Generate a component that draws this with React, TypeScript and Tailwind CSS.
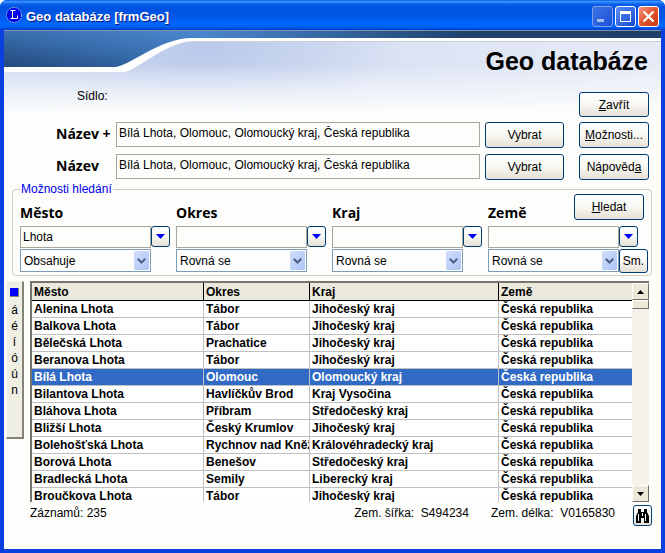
import { useState, type ReactNode } from "react";

const buttonBase =
  "rounded-[3px] border border-[#003c74] bg-linear-to-b from-white via-[#f8f7f3] to-[#e4e0d6] text-xs leading-4 text-black";

const rows: [string, string, string][] = [
  ["Alenina Lhota", "Tábor", "Jihočeský kraj"],
  ["Balkova Lhota", "Tábor", "Jihočeský kraj"],
  ["Bělečská Lhota", "Prachatice", "Jihočeský kraj"],
  ["Beranova Lhota", "Tábor", "Jihočeský kraj"],
  ["Bílá Lhota", "Olomouc", "Olomoucký kraj"],
  ["Bilantova Lhota", "Havlíčkův Brod", "Kraj Vysočina"],
  ["Bláhova Lhota", "Příbram", "Středočeský kraj"],
  ["Bližší Lhota", "Český Krumlov", "Jihočeský kraj"],
  ["Bolehošťská Lhota", "Rychnov nad Kněž", "Královéhradecký kraj"],
  ["Borová Lhota", "Benešov", "Středočeský kraj"],
  ["Bradlecká Lhota", "Semily", "Liberecký kraj"],
  ["Broučkova Lhota", "Tábor", "Jihočeský kraj"],
];

const filters = [
  { id: "mesto", label: "Město", value: "Lhota", mode: "Obsahuje" },
  { id: "okres", label: "Okres", value: "", mode: "Rovná se" },
  { id: "kraj", label: "Kraj", value: "", mode: "Rovná se" },
  { id: "zeme", label: "Země", value: "", mode: "Rovná se" },
];

function TitleBar() {
  return (
    <header className="flex h-[30px] items-center rounded-t-[7px] bg-[linear-gradient(180deg,#0058e6_0%,#3a93ff_5%,#0a60ea_14%,#0053e1_25%,#0055e5_50%,#0066ff_80%,#0062f8_90%,#0046d8_97%,#003cc8_100%)] pr-[6px] pl-[6px]">
      <svg width="16" height="16" viewBox="0 0 16 16" aria-hidden="true">
        <circle cx="8" cy="8" r="7.500" fill="#0000f0" stroke="#9db6d8" strokeWidth="1" strokeDasharray="2 1" />
        <path d="M4.500 3.500h5M6.500 3.500v8M4.500 11.500h7v-3" fill="none" stroke="#fff" strokeWidth="1" />
      </svg>
      <span className="ml-1 flex-1 pt-[3px] text-[13px] leading-5 font-bold text-white [text-shadow:1px_1px_#0a1883]">
        Geo databáze [frmGeo]
      </span>
      <div className="flex gap-[2px] pt-[3px]">
        <button
          aria-label="Minimalizovat"
          className="size-[21px] rounded-[3px] border border-[#7ea2ee] bg-linear-to-br from-[#3f74e6] to-[#1c50d6]"
        >
          <svg width="19" height="19" viewBox="0 0 19 19">
            <path d="M4 12h7v3H4z" fill="#a5bdf3" />
          </svg>
        </button>
        <button
          aria-label="Maximalizovat"
          className="size-[21px] rounded-[3px] border border-white bg-linear-to-br from-[#5c8df5] to-[#1246d0]"
        >
          <svg width="19" height="19" viewBox="0 0 19 19">
            <path d="M4 4h11v11H4zM5 7v7h9V7z" fill="#fff" fillRule="evenodd" />
          </svg>
        </button>
        <button
          aria-label="Zavřít okno"
          className="size-[21px] rounded-[3px] border border-white bg-linear-to-br from-[#f0937a] via-[#e2532f] to-[#c73a12]"
        >
          <svg width="19" height="19" viewBox="0 0 19 19">
            <path d="M4.500 4.500l10 10M14.500 4.500l-10 10" stroke="#fff" strokeWidth="2.200" />
          </svg>
        </button>
      </div>
    </header>
  );
}

function Banner() {
  return (
    <div className="absolute inset-x-0 top-0 h-[85px] overflow-hidden bg-linear-to-r from-[#d3dcf1] via-[#d9e1f3] to-[#e6ebf6]">
      <div className="absolute inset-0 bg-[radial-gradient(ellipse_200px_60px_at_200px_20px,#b9c9ea,transparent)]" />
      <div className="absolute inset-x-0 bottom-0 h-[50px] bg-linear-to-b from-transparent to-[#fdfefd]" />
      <div className="absolute inset-x-0 top-0 h-3 border-b border-[#c9cdd8] bg-white" />
      <div className="absolute inset-x-0 top-0 h-2 border-t border-[#7f93ad] bg-[linear-gradient(90deg,#3d70b0,#4a86cc_200px,#33639c_340px,#1f426e_460px,#1f3f66)]" />
      <svg className="absolute top-0 left-0" width="200" height="44" viewBox="0 0 200 44" aria-hidden="true">
        <defs>
          <linearGradient id="wave" x1="0" y1="1" x2="0.900" y2="0">
            <stop offset="0" stopColor="#23497c" />
            <stop offset="0.500" stopColor="#376cab" />
            <stop offset="1" stopColor="#4a86cc" />
          </linearGradient>
        </defs>
        <path d="M0 37H110C125 37 155 8 188 8H200V11H190C160 12 132 42 119 42H0Z" fill="#fff" />
        <path d="M0 1H200V8H188C155 8 125 37 110 37H0Z" fill="url(#wave)" />
        <path d="M0 0.500H200" stroke="#7f93ad" />
      </svg>
    </div>
  );
}

function NameRow({ id, label, action }: { id: string; label: string; action: ReactNode }) {
  return (
    <div className="flex h-[26px] items-start">
      <label
        htmlFor={id}
        className="w-[60px] pt-1 font-['Open_Sans',sans-serif] text-sm leading-4 font-bold whitespace-nowrap"
      >
        {label}
      </label>
      <input
        id={id}
        readOnly
        value="Bílá Lhota, Olomouc, Olomoucký kraj, Česká republika"
        className="h-[25px] min-w-0 flex-1 border border-[#aca899] bg-[#fdfefc] px-[2px] pb-[3px] text-xs outline-none"
      />
      <button className={`${buttonBase} ml-[5px] h-[26px] w-[79px]`}>Vybrat</button>
      <div className="ml-[15px] flex">{action}</div>
    </div>
  );
}

function SearchPanel() {
  return (
    <fieldset className="relative mt-px mr-[9px] ml-2 min-w-0 rounded-[4px] border border-[#d0cdbf] pr-[13px] pb-[2px] pl-[7px]">
      <legend className="px-px text-xs leading-4 text-[#0000e8]">Možnosti hledání</legend>
      <button className={`${buttonBase} absolute -top-[3px] right-[7px] h-[26px] w-[70px]`}>
        <u>H</u>ledat
      </button>
      <div className="flex gap-[6px] pt-2">
        {filters.map((f, i) => (
          <div key={f.id} className="min-w-0 flex-1">
            <label
              htmlFor={f.id}
              className="block h-[21px] font-['Open_Sans',sans-serif] text-sm leading-4 font-bold"
            >
              {f.label}
            </label>
            <div className="flex">
              <input
                id={f.id}
                defaultValue={f.value}
                className="h-[22px] min-w-0 flex-1 border border-[#aca899] bg-[#fdfefc] px-[2px] text-xs outline-none"
              />
              <button
                aria-label={`${f.label} – seznam`}
                className={`${buttonBase} flex h-[21px] w-[19px] items-center justify-center`}
              >
                <svg width="9" height="5" viewBox="0 0 9 5">
                  <path d="M0 0h9L4.500 5z" fill="#0000ff" />
                </svg>
              </button>
            </div>
            <div className={i === 3 ? "-mr-[10px] flex pt-[1px]" : "mr-[19px] flex pt-[1px]"}>
              <div className="relative min-w-0 flex-1">
                <select
                  aria-label={`${f.label} – podmínka`}
                  defaultValue={f.mode}
                  className="block h-[23px] w-full appearance-none border border-[#7f9db9] bg-[#fdfefc] pl-[3px] text-xs outline-none"
                >
                  <option>Obsahuje</option>
                  <option>Rovná se</option>
                </select>
                <span className="pointer-events-none absolute top-[2px] right-[2px] flex h-[19px] w-[15px] items-center justify-center rounded-[1px] bg-linear-to-br from-[#d2defc] to-[#adc4f5]">
                  <svg width="9" height="6" viewBox="0 0 9 6">
                    <path d="M0.700 0.700L4.500 4.500L8.300 0.700" fill="none" stroke="#4d6185" strokeWidth="2" />
                  </svg>
                </span>
              </div>
              {i === 3 && <button className={`${buttonBase} h-6 w-[29px]`}>Sm.</button>}
            </div>
          </div>
        ))}
      </div>
    </fieldset>
  );
}

function CharStrip() {
  return (
    <div className="flex w-[18px] flex-col items-center self-start border-t border-l border-r-2 border-b-2 border-t-[#f8f7f0] border-l-[#f8f7f0] border-r-[#85827a] border-b-[#85827a] bg-[#efeee2] pt-[6px] pb-[39px] text-xs leading-4">
      <span className="mb-[5px] size-[9px] border-r border-b border-[#808080] bg-[#0000ff]" />
      {["á", "é", "í", "ó", "ú", "n"].map((c) => (
        <button key={c} className="h-4">
          {c}
        </button>
      ))}
    </div>
  );
}

const scrollButton =
  "flex h-[17px] w-full items-center justify-center border border-t-white border-l-white border-r-[#716f64] border-b-[#716f64] bg-[#ece9d8]";

function ResultTable() {
  const [selected, setSelected] = useState(4);
  const cell = "border-r border-b border-[#c0c0c0] pl-[2px]";
  return (
    <div className="flex h-[221px] min-w-0 flex-1 border-t-2 border-l-2 border-[#77756b] bg-white">
      <div className="min-w-0 flex-1 overflow-hidden">
        <table className="w-full table-fixed border-separate border-spacing-0 text-left text-xs leading-4 font-bold">
          <colgroup>
            <col className="w-[172px]" />
            <col className="w-[106px]" />
            <col className="w-[189px]" />
            <col />
          </colgroup>
          <thead>
            <tr className="h-[18px] bg-[#ebe8dc]">
              {filters.map((f, i) => (
                <th
                  key={f.id}
                  className={
                    i < 3
                      ? "border-r border-b border-black px-[2px]"
                      : "border-b border-black px-[2px]"
                  }
                >
                  {f.label}
                </th>
              ))}
            </tr>
          </thead>
          <tbody>
            {rows.map((r, i) => (
              <tr
                key={r[0]}
                onClick={() => setSelected(i)}
                className={i === selected ? "h-[17px] bg-[#316ac5] text-white" : "h-[17px]"}
              >
                {r.map((text, c) => (
                  <td key={c} className={cell}>
                    <div className="overflow-hidden whitespace-nowrap">{text}</div>
                  </td>
                ))}
                <td className="border-b border-[#c0c0c0] px-[2px]">
                  <div className="overflow-hidden whitespace-nowrap">Česká republika</div>
                </td>
              </tr>
            ))}
          </tbody>
        </table>
      </div>
      <div className="flex w-[17px] flex-col bg-[#f4f2ea]">
        <button aria-label="Nahoru" className={scrollButton}>
          <svg width="7" height="4" viewBox="0 0 7 4">
            <path d="M0 4h7L3.500 0z" />
          </svg>
        </button>
        <div className="h-[9px] border border-t-white border-l-white border-r-[#716f64] border-b-[#716f64] bg-[#ece9d8]" />
        <div className="flex-1" />
        <button aria-label="Dolů" className={scrollButton}>
          <svg width="7" height="4" viewBox="0 0 7 4">
            <path d="M0 0h7L3.500 4z" />
          </svg>
        </button>
      </div>
    </div>
  );
}

export default function App() {
  return (
    <div className="flex min-h-screen flex-col rounded-t-[7px] bg-[#0a3fe0] font-['Liberation_Sans',Arial,sans-serif] text-xs text-black">
      <TitleBar />
      <main className="relative mx-1 mb-1 flex-1 bg-[#fdfefc]">
        <Banner />
        <div className="relative">
          <h1 className="pt-4 pr-[13px] text-right text-[25px] leading-[30px] font-bold">Geo databáze</h1>
          <div className="flex items-end justify-between pt-3 pr-3 pl-[73px]">
            <span className="self-start leading-4">Sídlo:</span>
            <button className={`${buttonBase} mt-1 h-[25px] w-[70px]`}>
              <u>Z</u>avřít
            </button>
          </div>
          <div className="flex flex-col gap-[6px] pt-[5px] pr-3 pl-[52px]">
            <NameRow
              id="nazev-plus"
              label="Název +"
              action={
                <button className={`${buttonBase} h-[26px] w-[70px]`}>
                  <u>M</u>ožnosti...
                </button>
              }
            />
            <NameRow
              id="nazev"
              label="Název"
              action={
                <button className={`${buttonBase} h-[26px] w-[70px]`}>
                  Nápověd<u>a</u>
                </button>
              }
            />
          </div>
          <SearchPanel />
          <div className="flex gap-[6px] pt-[5px] pr-3 pl-[2px]">
            <CharStrip />
            <ResultTable />
          </div>
          <div className="flex items-start pt-[3px] pr-[9px] pl-[26px] leading-4">
            <span className="flex-1">Záznamů: 235</span>
            <span className="mr-[22px] whitespace-pre">Zem. šířka:  S494234</span>
            <span className="mr-[18px] whitespace-pre">Zem. délka:  V0165830</span>
            <button
              aria-label="Hledat v seznamu"
              className={`${buttonBase} flex h-[21px] w-[19px] items-center justify-center`}
            >
              <svg width="13" height="14" viewBox="0 0 13 14">
                <path d="M2 0h3v3h3V0h3v3l2 4v7H8V9H5v5H0V7l2-4z" />
                <path d="M2.500 5v7M9.500 5v7M6.500 4v3" stroke="#fff" strokeWidth="1" />
              </svg>
            </button>
          </div>
        </div>
      </main>
    </div>
  );
}
